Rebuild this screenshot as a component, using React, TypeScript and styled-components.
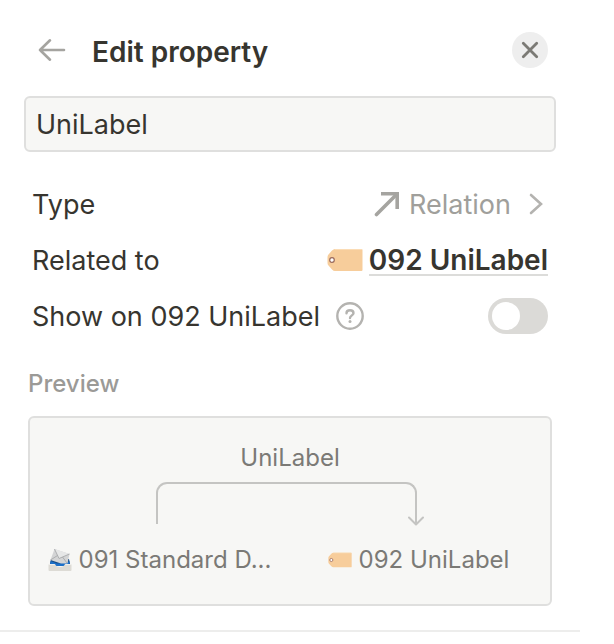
import React, { useState } from "react";
import styled, { createGlobalStyle } from "styled-components";

const GlobalStyle = createGlobalStyle`
  *, *::before, *::after { box-sizing: border-box; }
  body {
    margin: 0;
    background: #fff;
    color: #37352f;
    font-family: Inter, "Liberation Sans", sans-serif;
  }
  button, input { font: inherit; color: inherit; }
  button { border: 0; padding: 0; background: none; cursor: pointer; }
`;

const Panel = styled.main`
  margin-right: 34px;
  padding: 28px 24px 24px;
  border-bottom: 2px solid #ededec;
`;

const Header = styled.header`
  display: flex;
  align-items: center;
  height: 44px;
  margin-bottom: 24px;
  padding: 0 8px 0 12px;
`;

const BackButton = styled.button`
  display: flex;
  width: 32px;
  height: 32px;
  align-items: center;
  justify-content: center;
`;

const Title = styled.h1`
  flex: 1;
  margin: 4px 0 0 24px;
  font-size: 28px;
  line-height: 32px;
  font-weight: 600;
`;

const CloseButton = styled.button`
  display: flex;
  width: 36px;
  height: 36px;
  align-items: center;
  justify-content: center;
  border-radius: 50%;
  background: #eeeeee;
`;

const NameInput = styled.input`
  display: block;
  width: 100%;
  height: 56px;
  padding: 0 10px;
  border: 2px solid #dfdfde;
  border-radius: 6px;
  outline: 0;
  background: #f7f7f5;
  font-size: 27px;
`;

const Rows = styled.div`
  margin-top: 24px;
  padding: 0 8px;
`;

const Row = styled.div`
  display: flex;
  align-items: center;
  justify-content: space-between;
  height: 56px;
  font-size: 27px;
  line-height: 36px;
`;

const RowText = styled.span`
  padding-top: 2px;
`;

const LabelGroup = styled.div`
  display: flex;
  align-items: center;
  gap: 16px;
`;

const TypeButton = styled.button`
  display: flex;
  align-items: center;
  color: #a09f9b;
  gap: 9px;
`;

const Chevron = styled.svg`
  margin: 0 4px 0 8px;
`;

const RelatedLink = styled.a`
  display: flex;
  align-items: center;
  gap: 6px;
  color: inherit;
  font-weight: 600;
  font-size: 28px;
  line-height: 28px;
  text-decoration: none;
`;

const Underlined = styled.span`
  padding-top: 2px;
  border-bottom: 2px solid #dcdcda;
`;

const HelpButton = styled.button`
  display: flex;
`;

const Toggle = styled.input`
  appearance: none;
  width: 60px;
  height: 36px;
  margin: 0;
  padding: 4px;
  border-radius: 18px;
  background: #dbdad7;
  cursor: pointer;

  &::before {
    content: "";
    display: block;
    width: 28px;
    height: 28px;
    border-radius: 50%;
    background: #fff;
  }
  &:checked { background: #2383e2; }
  &:checked::before { margin-left: auto; }
`;

const Caption = styled.h2`
  margin: 24px 4px 16px;
  color: #9b9a97;
  font-size: 24px;
  line-height: 32px;
  font-weight: 500;
`;

const Preview = styled.section`
  height: 190px;
  margin: 0 4px;
  padding-top: 24px;
  border: 2px solid #dfdfde;
  border-radius: 6px;
  background: #f7f7f5;
  color: #7b7a76;
  font-size: 24px;
  line-height: 32px;
`;

const PreviewName = styled.div`
  text-align: center;
`;

const Connector = styled.div`
  position: relative;
  height: 42px;
  margin: 8px 133px 20px 126px;
  border: 2px solid #c4c4c2;
  border-bottom: 0;
  border-radius: 11px 11px 0 0;
`;

const ArrowHead = styled.svg`
  position: absolute;
  right: -9px;
  bottom: -2px;
`;

const Ends = styled.div`
  display: grid;
  grid-template-columns: 1fr 1fr;
  padding-right: 2px;
`;

const End = styled.div`
  display: flex;
  align-items: center;
  justify-content: center;
  gap: 7px;
  white-space: nowrap;

  svg { flex: none; }
`;

function Tag({ width }: { width: number }) {
  return (
    <svg width={width} height={Math.round((width * 24) / 36)} viewBox="0 0 36 24" aria-hidden="true">
      <path d="M8 1H34.5a1 1 0 0 1 1 1V22a1 1 0 0 1-1 1H8Q6.500 23 5 21.500L1.500 17.500Q.5 16.500.5 15V9Q.5 7.500 1.500 6.500L5 2.500Q6.500 1 8 1Z" fill="#f7cd9b" />
      <path d="M8 1.500H35" stroke="#fbdcb5" />
      <circle cx="5" cy="12" r="2.300" fill="#fff" stroke="#9a6a5c" strokeWidth="1.200" />
    </svg>
  );
}

function Envelope() {
  return (
    <svg width="24" height="24" viewBox="0 0 24 24" aria-hidden="true">
      <path d="M3 11H21L22.500 18H1.500Z" fill="#174c86" />
      <path d="M2.500 13 9 15.500 18 15 21.500 13V18H2Z" fill="#1b6fc8" />
      <path d="M6.500 1 21.500 6 19.500 15.500 13 15.500 2.500 12Z" fill="#d3d4d5" />
      <path d="M6.500 1 11 10.500 21.500 6Z" fill="#e6e7e7" />
      <path d="M6.500 1 11 10.500 21.500 6M2.500 12 9.500 7.500M19 15 14.500 9" fill="none" stroke="#a2a3a5" strokeWidth=".8" />
      <path d="M.5 17Q.5 16 1.500 16H7Q8 19 12 19T17 16H22.500Q23.500 16 23.500 17V22Q23.500 23 22.500 23H1.500Q.5 23 .5 22Z" fill="#dddbd5" />
      <path d="M1 16.500H6.500M17.500 16.500H23" stroke="#f0eeea" />
    </svg>
  );
}

export default function App() {
  const [name, setName] = useState("UniLabel");
  const [shown, setShown] = useState(false);

  return (
    <>
      <GlobalStyle />
      <Panel>
        <Header>
          <BackButton type="button" aria-label="Back">
            <svg width="28" height="24" viewBox="0 0 28 24" fill="none" stroke="#a5a4a0" strokeWidth="2.600" strokeLinecap="round" strokeLinejoin="round">
              <path d="M26 12H2M12 2.300 2 12 12 21.700" />
            </svg>
          </BackButton>
          <Title>Edit property</Title>
          <CloseButton type="button" aria-label="Close">
            <svg width="18" height="18" viewBox="0 0 18 18" fill="none" stroke="#7b7a75" strokeWidth="2.800" strokeLinecap="round">
              <path d="M2.300 2.300 15.700 15.700M15.700 2.300 2.300 15.700" />
            </svg>
          </CloseButton>
        </Header>

        <NameInput aria-label="Property name" value={name} onChange={(e) => setName(e.target.value)} />

        <Rows>
          <Row>
            <RowText>Type</RowText>
            <TypeButton type="button">
              <svg width="26" height="26" viewBox="0 0 26 26" fill="none" stroke="#a5a4a0" strokeWidth="3.600" aria-hidden="true">
                <path d="M7 2.800H23.200V18" />
                <path d="M22.500 3.500 2.500 23.500" strokeLinecap="round" />
              </svg>
              <RowText>Relation</RowText>
              <Chevron width="16" height="22" viewBox="0 0 16 22" fill="none" stroke="#b4b3b0" strokeWidth="2.600" strokeLinecap="round" aria-hidden="true">
                <path d="M3 2 13 11 3 20" />
              </Chevron>
            </TypeButton>
          </Row>
          <Row>
            <RowText>Related to</RowText>
            <RelatedLink href="#unilabel">
              <Tag width={36} />
              <Underlined>092 UniLabel</Underlined>
            </RelatedLink>
          </Row>
          <Row>
            <LabelGroup>
              <RowText as="label" htmlFor="show-on">Show on 092 UniLabel</RowText>
              <HelpButton type="button" aria-label="Help">
                <svg width="28" height="28" viewBox="0 0 28 28" fill="none" stroke="#b4b3b0" strokeWidth="2.400" strokeLinecap="round">
                  <circle cx="14" cy="14" r="12.700" />
                  <path d="M10.500 11.200C10.500 9.200 12 8.200 14 8.200S17.500 9.300 17.500 11.200C17.500 13.300 14 13.500 14 16" />
                  <circle cx="14" cy="19.600" r="1.500" fill="#b4b3b0" stroke="none" />
                </svg>
              </HelpButton>
            </LabelGroup>
            <Toggle id="show-on" type="checkbox" role="switch" checked={shown} onChange={(e) => setShown(e.target.checked)} />
          </Row>
        </Rows>

        <Caption>Preview</Caption>
        <Preview>
          <PreviewName>{name}</PreviewName>
          <Connector>
            <ArrowHead width="16" height="10" viewBox="0 0 16 10" fill="none" stroke="#c4c4c2" strokeWidth="2" strokeLinecap="round" strokeLinejoin="round" aria-hidden="true">
              <path d="M1 1.500 8 8.500 15 1.500" />
            </ArrowHead>
          </Connector>
          <Ends>
            <End>
              <Envelope />
              <span>091 Standard D...</span>
            </End>
            <End>
              <Tag width={24} />
              <span>092 UniLabel</span>
            </End>
          </Ends>
        </Preview>
      </Panel>
    </>
  );
}
